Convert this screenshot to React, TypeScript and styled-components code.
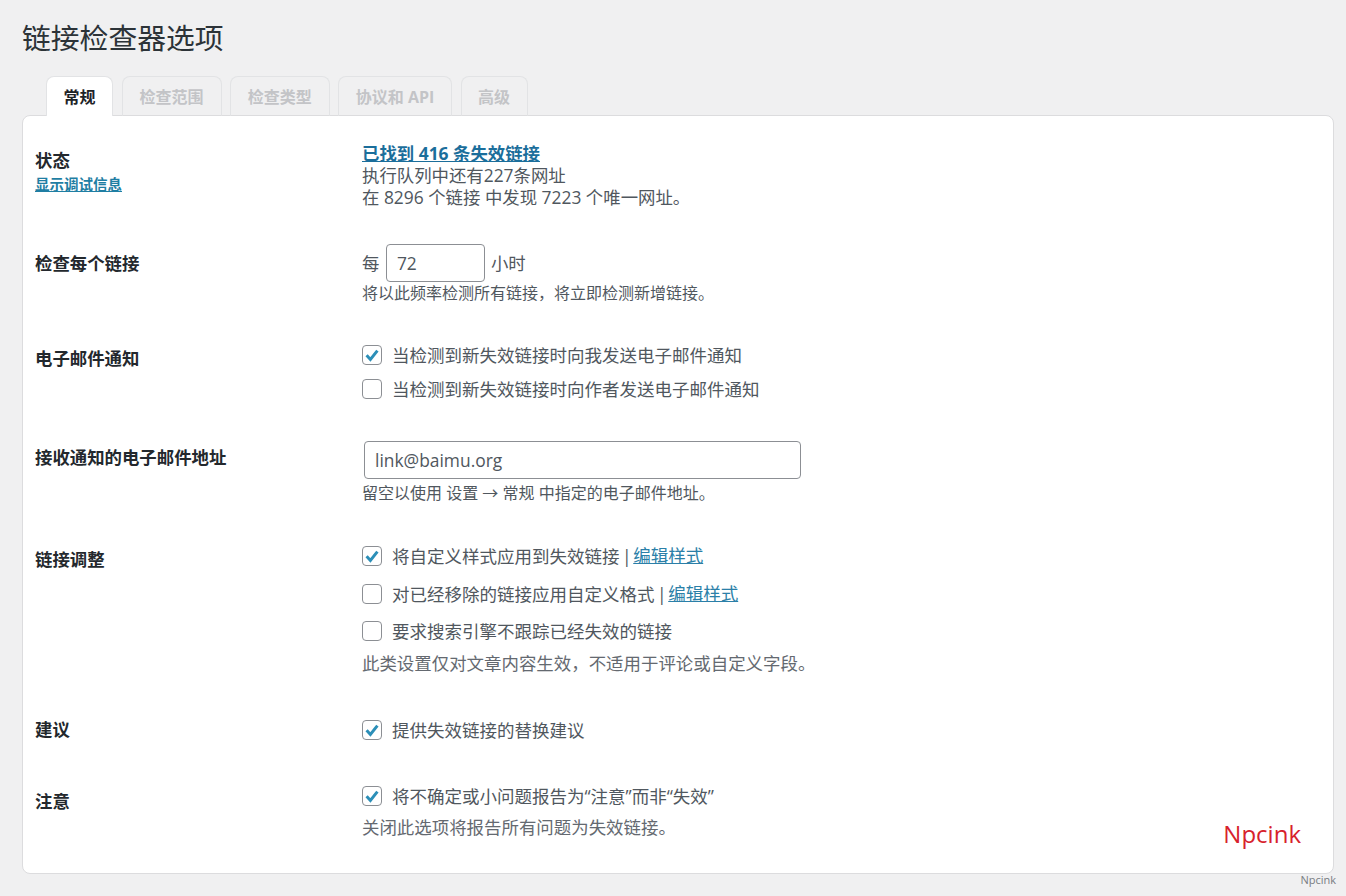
import { type ReactNode } from "react";
import styled, { createGlobalStyle } from "styled-components";

const GlobalStyle = createGlobalStyle`
  html, body {
    margin: 0;
    padding: 0;
    background: #f0f0f1;
  }
  body {
    font-family: "Open Sans", "Noto Sans CJK SC", sans-serif;
    color: #3c434a;
  }
  * {
    box-sizing: border-box;
  }
`;

const Page = styled.div`
  position: relative;
  width: 1346px;
  height: 896px;
  padding: 18px 12px 0 22px;
  overflow: hidden;
`;

const Title = styled.h1`
  margin: 0 0 18px;
  height: 40px;
  font-size: 28.8px;
  line-height: 40px;
  font-weight: 400;
  color: #2c3338;
`;

const Tabs = styled.div`
  display: flex;
  height: 39px;
  padding-left: 24px;
  position: relative;
  z-index: 1;
`;

const Tab = styled.div<{ $active?: boolean; $width: number }>`
  width: ${({ $width }) => $width}px;
  height: 40px;
  margin-right: 8.5px;
  border: 1px solid #e2e3e5;
  border-bottom: ${({ $active }) => ($active ? "none" : "1px solid #dcdcde")};
  border-radius: 8px 8px 0 0;
  background: ${({ $active }) => ($active ? "#fff" : "#f0f0f1")};
  color: ${({ $active }) => ($active ? "#1d2327" : "#c3c4c7")};
  font-size: 16px;
  font-weight: 700;
  line-height: 40px;
  text-align: center;
`;

const Panel = styled.div`
  position: relative;
  height: 759px;
  padding: 23px 13px 0 12px;
  background: #fff;
  border: 1px solid #dcdcde;
  border-radius: 8px;
`;

const Row = styled.div<{ $height: number }>`
  display: grid;
  grid-template-columns: 327px 1fr;
  height: ${({ $height }) => $height}px;
`;

const Label = styled.div<{ $top?: number }>`
  padding-top: ${({ $top }) => $top ?? 0}px;
  font-size: 17.4px;
  line-height: 22px;
  font-weight: 700;
  color: #23282d;
`;

const DebugLink = styled.a`
  display: block;
  font-size: 14.5px;
  line-height: 28px;
  font-weight: 700;
  color: #1f7ea3;
  text-decoration: underline;
`;

const Value = styled.div<{ $top?: number }>`
  padding-top: ${({ $top }) => $top ?? 0}px;
  font-size: 17.4px;
  line-height: 22px;
  color: #50575e;
`;

const StatusLink = styled.a`
  display: block;
  font-weight: 700;
  color: #1b6e9b;
  text-decoration: underline;
`;

const Inline = styled.div`
  display: flex;
  align-items: center;
  height: 38px;
`;

const NumberInput = styled.input`
  width: 99px;
  height: 38px;
  margin: 0 6px 0 6.5px;
  padding: 0 10px;
  border: 1px solid #8c8f94;
  border-radius: 4px;
  background: #fff;
  color: #50575e;
  font: inherit;
  line-height: 36px;
  outline: none;
`;

const EmailInput = styled(NumberInput)`
  display: block;
  width: 437px;
  margin: 0 0 0 2px;
`;

const Hint = styled.div<{ $large?: boolean; $top?: number }>`
  margin-top: ${({ $top }) => $top ?? 0}px;
  font-size: ${({ $large }) => ($large ? 17.45 : 16)}px;
  line-height: 22px;
  color: ${({ $large }) => ($large ? "#646970" : "#50575e")};
`;

const CheckRow = styled.label<{ $height?: number }>`
  display: flex;
  align-items: center;
  height: ${({ $height }) => $height ?? 34}px;
  gap: 10px;
  font-size: 17.5px;
  color: #50575e;
`;

const Box = styled.span`
  display: flex;
  align-items: center;
  justify-content: center;
  width: 20px;
  height: 20px;
  border: 1px solid #8c8f94;
  border-radius: 4px;
  background: #fff;
`;

const Separator = styled.span`
  margin: 0 -2px;
`;

const EditLink = styled.a`
  margin-left: -1px;
  color: #2b7fa8;
  font-size: 17.5px;
  text-decoration: underline;
  position: relative;
  top: -1px;
`;

const Watermark = styled.div`
  position: absolute;
  right: 32px;
  bottom: 22px;
  color: #d7222c;
  font-family: "Open Sans", sans-serif;
  font-size: 24px;
  line-height: 34px;
`;

const Credit = styled.div`
  margin: 0 -2px 0 0;
  text-align: right;
  font-size: 11px;
  line-height: 12px;
  color: #787c82;
`;

const Check = ({ checked, children, height }: { checked?: boolean; children: ReactNode; height?: number }) => (
  <CheckRow $height={height}>
    <Box>
      {checked && (
        <svg width="16" height="16" viewBox="0 0 16 16">
          <path d="M2.6 8.2 6.4 12.4 13.4 3.6" fill="none" stroke="#2c8fb8" strokeWidth="3" />
        </svg>
      )}
    </Box>
    <span>{children}</span>
  </CheckRow>
);

export default function App() {
  return (
    <Page>
      <GlobalStyle />
      <Title>链接检查器选项</Title>
      <Tabs>
        <Tab $active $width={67}>常规</Tab>
        <Tab $width={100}>检查范围</Tab>
        <Tab $width={99.5}>检查类型</Tab>
        <Tab $width={114}>协议和 API</Tab>
        <Tab $width={67}>高级</Tab>
      </Tabs>
      <Panel>
        <Row $height={102}>
          <Label $top={10}>
            状态
            <DebugLink>显示调试信息</DebugLink>
          </Label>
          <Value $top={3}>
            <StatusLink>已找到 416 条失效链接</StatusLink>
            <div>执行队列中还有227条网址</div>
            <div>在 8296 个链接 中发现 7223 个唯一网址。</div>
          </Value>
        </Row>
        <Row $height={97}>
          <Label $top={11}>检查每个链接</Label>
          <Value $top={3}>
            <Inline>
              每<NumberInput defaultValue="72" />小时
            </Inline>
            <Hint>将以此频率检测所有链接，将立即检测新增链接。</Hint>
          </Value>
        </Row>
        <Row $height={98}>
          <Label $top={9}>电子邮件通知</Label>
          <Value>
            <Check checked>当检测到新失效链接时向我发送电子邮件通知</Check>
            <Check>当检测到新失效链接时向作者发送电子邮件通知</Check>
          </Value>
        </Row>
        <Row $height={101}>
          <Label $top={10}>接收通知的电子邮件地址</Label>
          <Value $top={5}>
            <EmailInput defaultValue="link@baimu.org" />
            <Hint $top={3}>留空以使用 设置 → 常规 中指定的电子邮件地址。</Hint>
          </Value>
        </Row>
        <Row $height={172}>
          <Label $top={11}>链接调整</Label>
          <Value>
            <Check checked height={38}>将自定义样式应用到失效链接 <Separator>|</Separator> <EditLink>编辑样式</EditLink></Check>
            <Check height={38}>对已经移除的链接应用自定义格式 <Separator>|</Separator> <EditLink>编辑样式</EditLink></Check>
            <Check height={36}>要求搜索引擎不跟踪已经失效的链接</Check>
            <Hint $large $top={3}>此类设置仅对文章内容生效，不适用于评论或自定义字段。</Hint>
          </Value>
        </Row>
        <Row $height={68}>
          <Label $top={9}>建议</Label>
          <Value $top={2}>
            <Check checked height={38}>提供失效链接的替换建议</Check>
          </Value>
        </Row>
        <Row $height={83}>
          <Label $top={13}>注意</Label>
          <Value>
            <Check checked height={38}>将不确定或小问题报告为“注意”而非“失效”</Check>
            <Hint $large $top={1}>关闭此选项将报告所有问题为失效链接。</Hint>
          </Value>
        </Row>
        <Watermark>Npcink</Watermark>
      </Panel>
      <Credit>Npcink</Credit>
    </Page>
  );
}
